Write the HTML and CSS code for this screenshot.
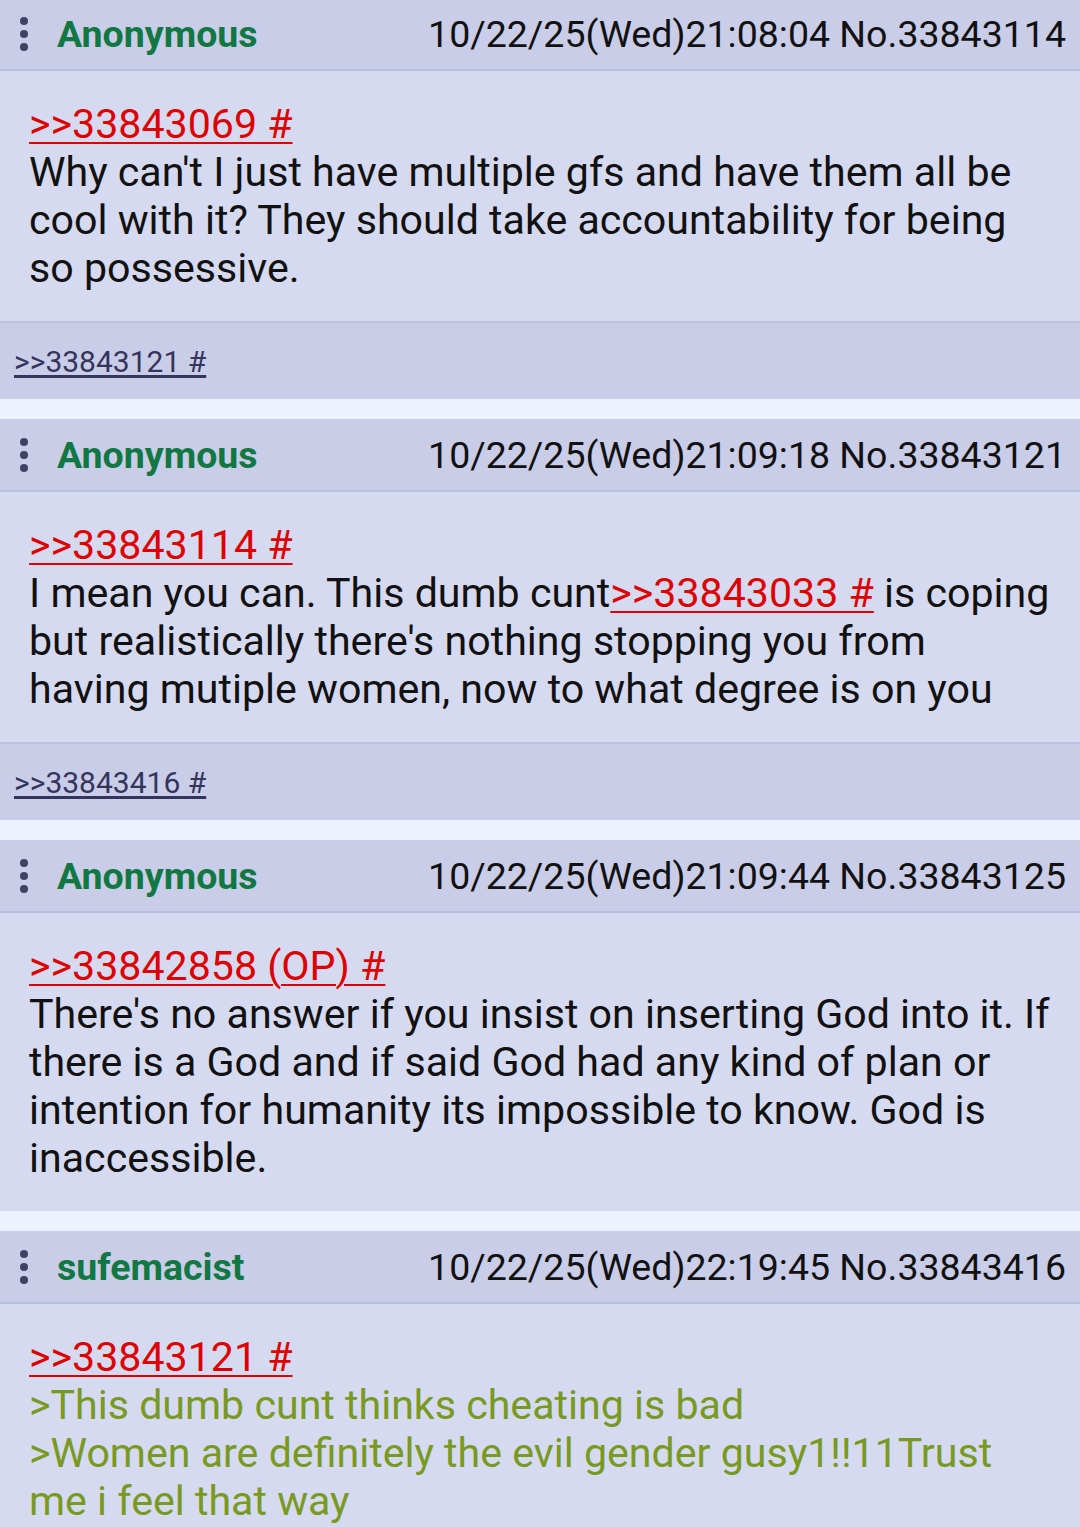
FILE: index.html
```html
<!DOCTYPE html>
<html>
<head>
<meta charset="utf-8">
<link rel="stylesheet" href="styles.css">
</head>
<body>
<div class="thread">
  <div class="post">
    <div class="post-header">
      <span class="menu"><i></i><i></i><i></i></span>
      <span class="name">Anonymous</span>
      <span class="info">10/22/25(Wed)21:08:04 No.33843114</span>
    </div>
    <div class="post-body">
      <a class="quote">&gt;&gt;33843069 #</a><br>
      Why can't I just have multiple gfs and have them all be cool with it? They should take accountability for being so possessive.
    </div>
    <div class="post-replies"><a>&gt;&gt;33843121 #</a></div>
  </div>

  <div class="post">
    <div class="post-header">
      <span class="menu"><i></i><i></i><i></i></span>
      <span class="name">Anonymous</span>
      <span class="info">10/22/25(Wed)21:09:18 No.33843121</span>
    </div>
    <div class="post-body">
      <a class="quote">&gt;&gt;33843114 #</a><br>
      I mean you can. This dumb cunt<a class="quote">&gt;&gt;33843033 #</a> is coping but realistically there's nothing stopping you from having mutiple women, now to what degree is on you
    </div>
    <div class="post-replies"><a>&gt;&gt;33843416 #</a></div>
  </div>

  <div class="post">
    <div class="post-header">
      <span class="menu"><i></i><i></i><i></i></span>
      <span class="name">Anonymous</span>
      <span class="info">10/22/25(Wed)21:09:44 No.33843125</span>
    </div>
    <div class="post-body">
      <a class="quote">&gt;&gt;33842858 (OP) #</a><br>
      There's no answer if you insist on inserting God into it. If there is a God and if said God had any kind of plan or intention for humanity its impossible to know. God is inaccessible.
    </div>
  </div>

  <div class="post">
    <div class="post-header">
      <span class="menu"><i></i><i></i><i></i></span>
      <span class="name">sufemacist</span>
      <span class="info">10/22/25(Wed)22:19:45 No.33843416</span>
    </div>
    <div class="post-body">
      <a class="quote">&gt;&gt;33843121 #</a><br>
      <span class="green">&gt;This dumb cunt thinks cheating is bad</span><br>
      <span class="green">&gt;Women are definitely the evil gender gusy1!!11Trust me i feel that way</span><br>
      <span class="green2">&gt;&gt;Chad and Stacy were here</span>
    </div>
  </div>
</div>
</body>
</html>
```

FILE: styles.css
```css
html, body {
  margin: 0;
  padding: 0;
  background: #eef2ff;
  font-family: Roboto, "Noto Sans", sans-serif;
  overflow: hidden;
}

.thread {
  display: flex;
  flex-direction: column;
  gap: 20px;
  margin-top: -2px;
}

.post {
  display: flex;
  flex-direction: column;
}

.post-header {
  display: flex;
  align-items: center;
  height: 71px;
  background: #c9cde8;
  border-bottom: 2px solid #b7c0dc;
  padding: 0 14px 0 20px;
}

.menu {
  display: flex;
  flex-direction: column;
  gap: 5px;
  width: 8px;
  margin-right: 29px;
}

.menu i {
  display: block;
  width: 8px;
  height: 8px;
  border-radius: 50%;
  background: #3f4263;
}

.name {
  font-weight: 700;
  font-size: 37.5px;
  color: #117743;
  flex: 1;
}

.info {
  font-size: 37.5px;
  color: #111;
}

.post-body {
  background: #d6daf0;
  padding: 29px 27px 29px 29px;
  font-size: 41.15px;
  line-height: 48px;
  color: #111;
}

.quote {
  color: #dd0000;
  text-decoration: underline;
  text-decoration-thickness: 2px;
  text-underline-offset: 4px;
}

.green {
  color: #789922;
}

.green2 {
  color: #a6c92a;
}

.post-replies {
  background: #c9cde8;
  border-top: 2px solid #bcc3df;
  height: 76px;
  display: flex;
  align-items: center;
  padding-left: 14px;
}

.post-replies a {
  font-size: 30px;
  color: #34345c;
  text-decoration: underline;
  text-underline-offset: 3px;
}
```
